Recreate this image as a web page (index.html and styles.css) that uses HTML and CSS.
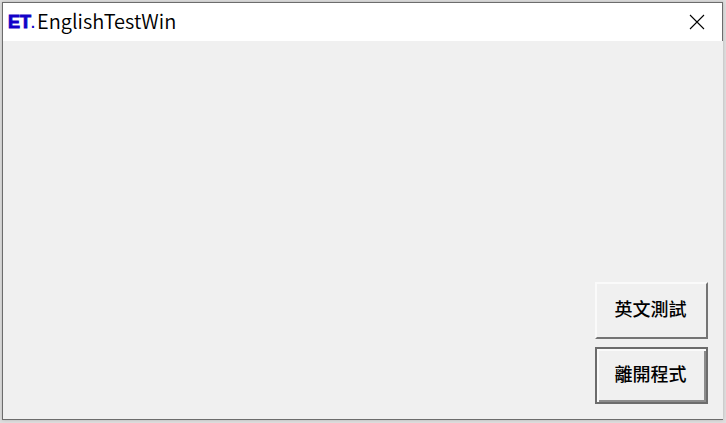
FILE: index.html
```html
<!DOCTYPE html>
<html lang="zh-Hant">
<head>
<meta charset="utf-8">
<title>EnglishTestWin</title>
<link rel="stylesheet" href="styles.css">
</head>
<body>
<main class="window">
  <header class="titlebar">
    <span class="logo">ET<span class="logo-dot">.</span></span>
    <h1 class="title">EnglishTestWin</h1>
    <button class="close" type="button" aria-label="關閉">
      <svg width="16" height="16" viewBox="0 0 16 16" aria-hidden="true"><path d="M1 1L15 15M15 1L1 15" stroke="#000" stroke-width="1.1" fill="none"/></svg>
    </button>
  </header>
  <section class="client">
    <button class="action" type="button">英文測試</button>
    <button class="action action-default" type="button">離開程式</button>
  </section>
</main>
</body>
</html>
```
FILE: styles.css
```css
* {
  box-sizing: border-box;
}

body {
  margin: 0;
  min-height: 100vh;
  padding: 2px 3px 3px 2px;
  display: flex;
  background: #dedede;
  font-family: "Noto Sans CJK TC", sans-serif;
  color: #000;
}

.window {
  flex: 1;
  display: flex;
  flex-direction: column;
  border-left: 1px solid #6c6c6c;
  border-bottom: 1px solid #6c6c6c;
  box-shadow: 0 0 3px #b4b4b4;
}

.titlebar {
  display: flex;
  align-items: center;
  height: 39px;
  padding: 0 17px 0 5px;
  background: #fff;
  border-top: 1px solid #6c6c6c;
  border-right: 1px solid #6c6c6c;
}

.logo {
  width: 29px;
  color: #1400c8;
  font: 700 18px/34px "Liberation Sans", sans-serif;
  -webkit-text-stroke: 1px #1400c8;
}

.logo-dot {
  font-size: 14px;
  -webkit-text-stroke: 0;
}

.title {
  margin: 0;
  padding-bottom: 2px;
  font: 350 20px/34px "Noto Sans CJK TC", sans-serif;
}

.close {
  display: flex;
  margin-left: auto;
  padding: 0;
  border: 0;
  background: none;
}

.client {
  flex: 1;
  display: flex;
  flex-direction: column;
  justify-content: flex-end;
  align-items: flex-end;
  gap: 8px;
  padding: 15px;
  background: #f0f0f0;
}

.action {
  width: 113px;
  height: 57px;
  padding: 0 2px 6px 0;
  border: 2px solid;
  border-color: #fafafa #747474 #747474 #fafafa;
  background: #f0f0f0;
  color: #000;
  font: 500 18px/24px "Noto Sans CJK TC", sans-serif;
}

.action-default {
  border-color: #6c6c6c;
  box-shadow: inset 2px 2px #fafafa, inset -2px -2px #8c8c8c;
}
```
